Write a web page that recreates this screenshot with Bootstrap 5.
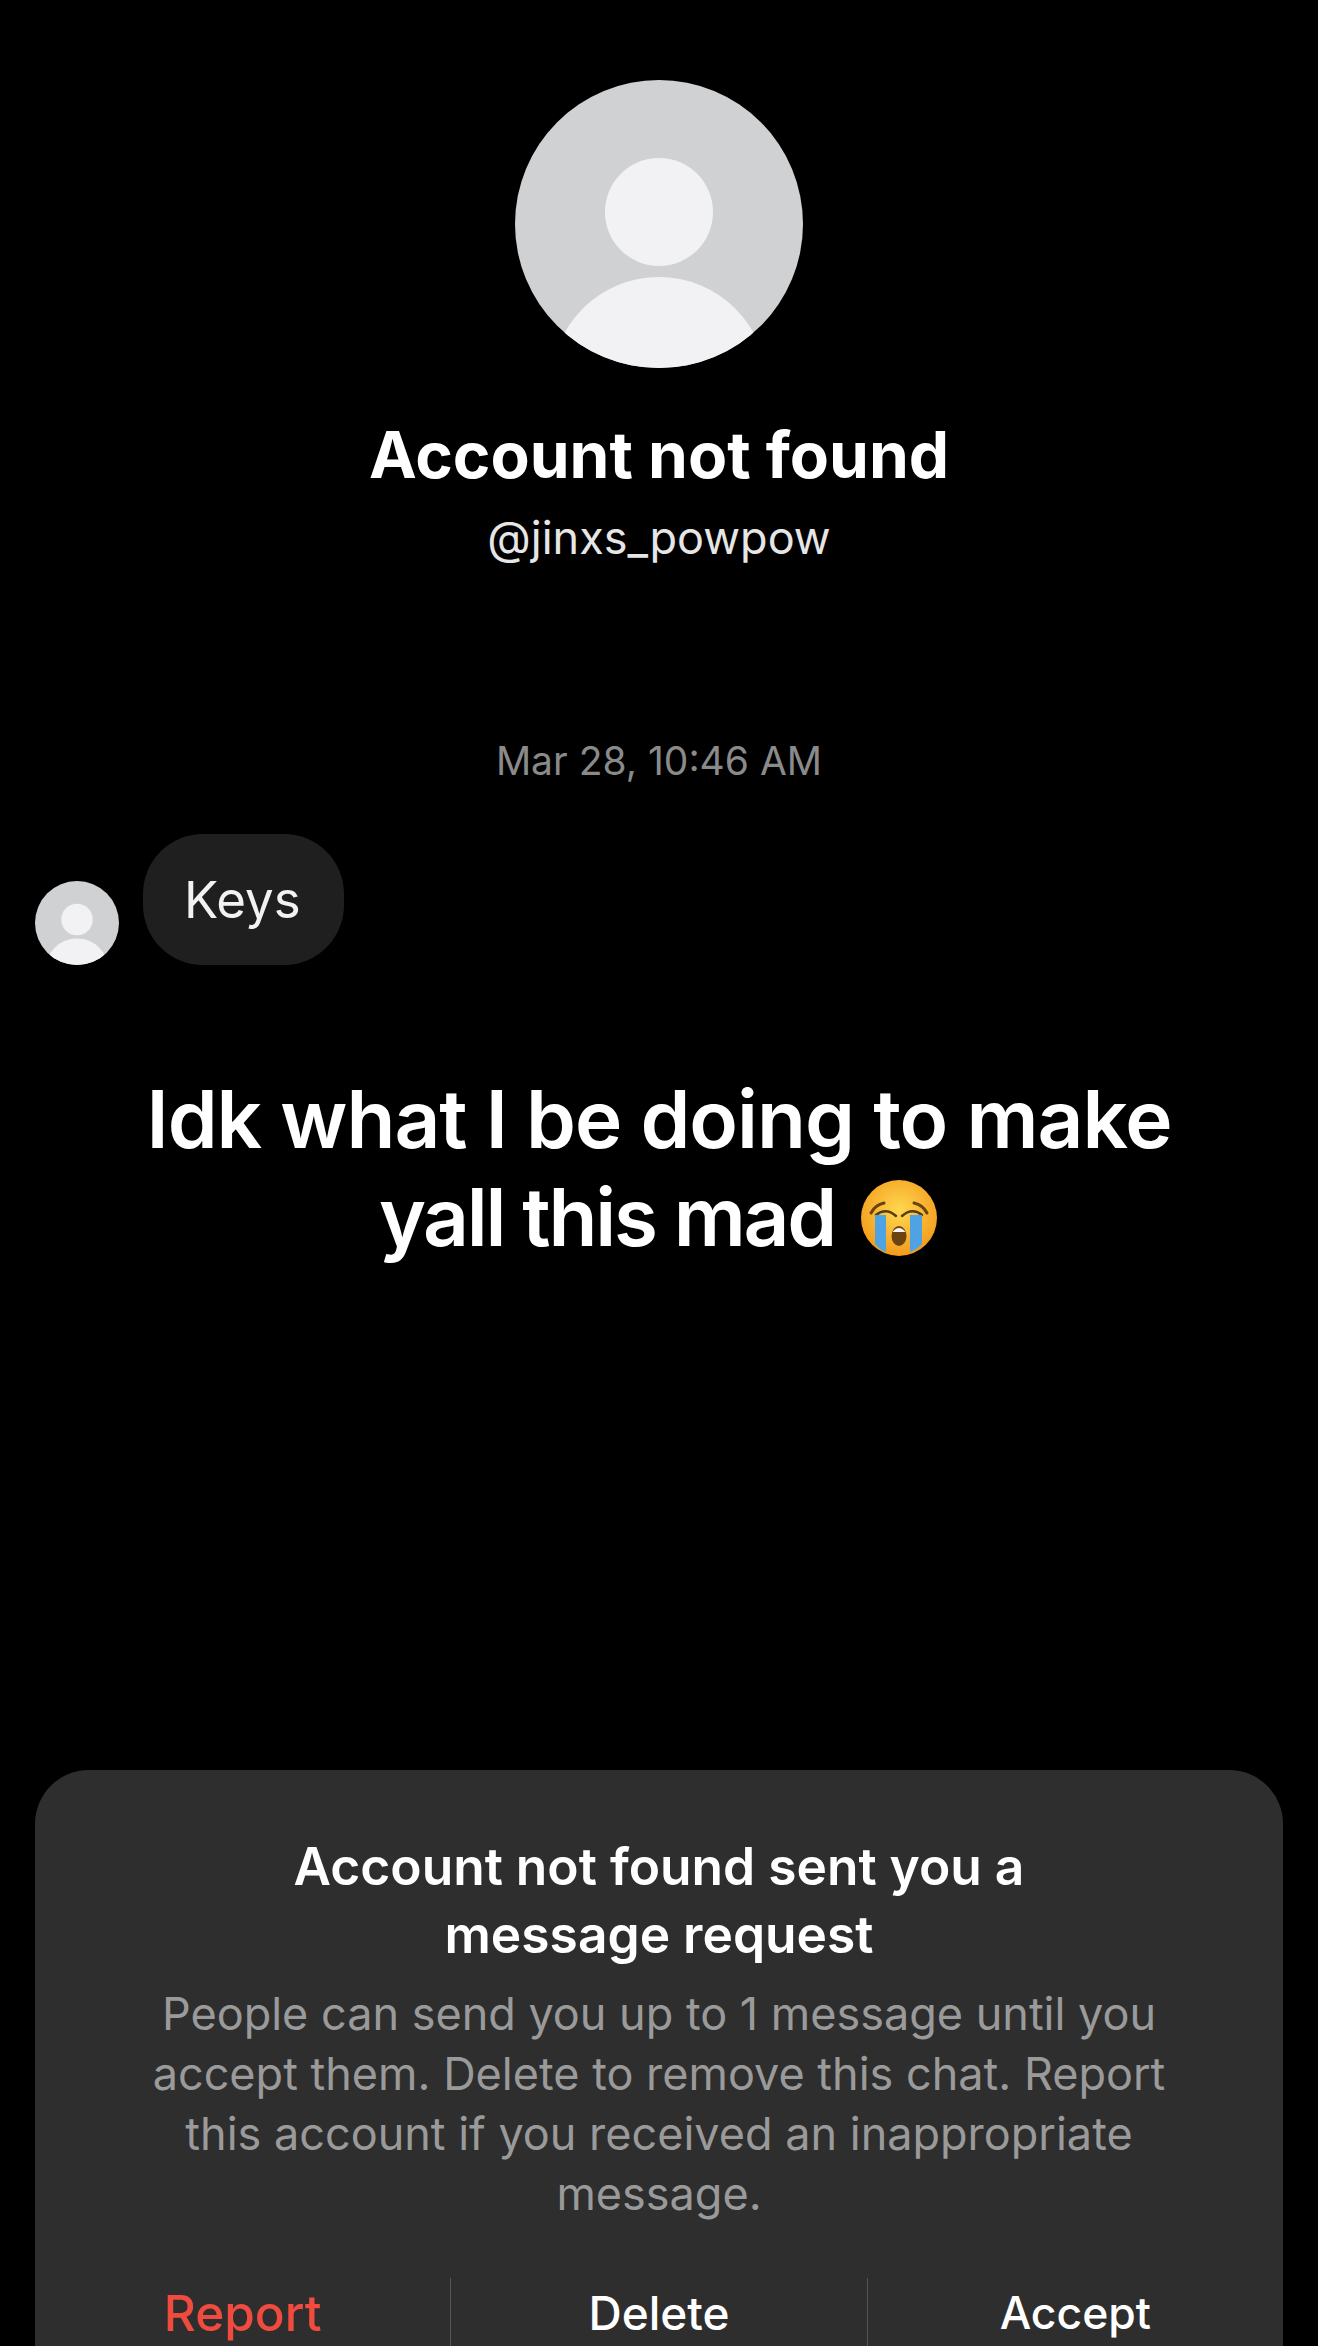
<!DOCTYPE html>
<html lang="en">
<head>
  <meta charset="UTF-8">
  <meta name="viewport" content="width=device-width, initial-scale=1.0">
  <title>Message request</title>
  <link href="https://cdn.jsdelivr.net/npm/bootstrap@5.3.0/dist/css/bootstrap.min.css" rel="stylesheet">
  <style>
    html, body { background: #000; }
    body { height: 2346px; overflow: hidden; font-family: Inter, "Liberation Sans", sans-serif; color: #fff; }
    .chat-page { padding: 80px 35px 0; }
    .avatar-big { width: 288px; height: 288px; display: block; }
    .avatar-small { width: 84px; height: 84px; display: block; flex-shrink: 0; }
    .profile-name { font-size: 64px; line-height: 76px; font-weight: 700; margin-top: 49px; margin-bottom: 0; }
    .profile-handle { font-size: 45px; line-height: 52px; color: #e6e6e6; margin-top: 19px; }
    .msg-date { font-size: 39px; line-height: 46px; color: #8a8a8a; margin-top: 174px; }
    .msg-row { margin-top: 50px; gap: 24px; }
    .msg-bubble { background: #1f1f1f; border-radius: 60px; font-size: 51px; line-height: 131px; height: 131px; padding: 0 43px 0 41px; color: #f2f2f2; }
    .big-text { font-size: 80px; line-height: 98px; font-weight: 600; letter-spacing: -1px; margin-top: 105px; }
    .big-line { letter-spacing: -2.200px; }
    .cry-emoji { width: 80px; height: 80px; vertical-align: -12px; margin-left: 5px; }
    .request-box { background: #2e2e2e; border-radius: 54px 54px 0 0; height: 576px; position: absolute; left: 35px; right: 35px; top: 1770px; padding-top: 62px; }
    .request-title { font-size: 51.500px; line-height: 68px; font-weight: 600; margin: 0; }
    .request-text { font-size: 45px; line-height: 60px; color: #9a9a9a; margin: 0 auto; width: 1060px; padding-top: 16px; }
    .action-row { position: absolute; left: 0; right: 0; top: 508px; bottom: 0; }
    .action-item { flex: 1 1 0; font-size: 46px; line-height: 70px; font-weight: 500; text-align: center; }
    .action-item + .action-item { border-left: 1px solid #555; }
    .action-report { color: #f04b3e; font-size: 49.500px; }
    .action-accept { font-size: 44.500px; }
  </style>
</head>
<body>
  <svg width="0" height="0" class="position-absolute">
    <symbol id="personAvatar" viewBox="0 0 288 288">
      <circle cx="144" cy="144" r="144" fill="#d0d1d3"/>
      <circle cx="144" cy="132" r="54" fill="#f2f2f4"/>
      <clipPath id="avClip"><circle cx="144" cy="144" r="144"/></clipPath>
      <circle cx="144" cy="305" r="108" fill="#f2f2f4" clip-path="url(#avClip)"/>
    </symbol>
  </svg>

  <div class="chat-page">
    <div class="d-flex flex-column align-items-center text-center">
      <svg class="avatar-big"><use href="#personAvatar"/></svg>
      <h1 class="profile-name">Account not found</h1>
      <div class="profile-handle">@jinxs_powpow</div>
      <div class="msg-date">Mar 28, 10:46 AM</div>
    </div>

    <div class="d-flex align-items-end msg-row">
      <svg class="avatar-small" viewBox="0 0 288 288"><use href="#personAvatar" width="288" height="288"/></svg>
      <div class="msg-bubble">Keys</div>
    </div>

    <div class="big-text text-center">Idk what I be doing to make<br><span class="big-line">yall this mad</span>
      <svg class="cry-emoji" viewBox="0 0 80 80">
        <defs>
          <radialGradient id="faceGrad" cx="50%" cy="40%" r="60%">
            <stop offset="0" stop-color="#ffd84f"/>
            <stop offset="1" stop-color="#f39a1c"/>
          </radialGradient>
        </defs>
        <circle cx="40" cy="40" r="38" fill="url(#faceGrad)"/>
        <path d="M12 35 Q16 27 25 25 M68 35 Q64 27 55 25" stroke="#6b4310" stroke-width="3" fill="none" stroke-linecap="round"/>
        <path d="M17 37 Q27 29 37 38 M43 38 Q53 29 63 37" stroke="#5a3a10" stroke-width="2.500" fill="none" stroke-linecap="round"/>
        <path d="M16 37 H27 V74 Q20 71 16 66 Z M51 37 H63 V66 Q59 71 51 74 Z" fill="#4fa3e3"/>
        <ellipse cx="40" cy="58" rx="7.500" ry="10" fill="#6b4310"/>
        <path d="M33.500 54 Q40 46 46.500 54 Z" fill="#f5f5f5"/>
      </svg>
    </div>
  </div>

  <div class="request-box text-center">
    <h2 class="request-title">Account not found sent you a<br>message request</h2>
    <p class="request-text">People can send you up to 1 message until you accept them. Delete to remove this chat. Report this account if you received an inappropriate message.</p>
    <div class="d-flex action-row">
      <div class="action-item action-report">Report</div>
      <div class="action-item">Delete</div>
      <div class="action-item action-accept">Accept</div>
    </div>
  </div>
</body>
</html>
